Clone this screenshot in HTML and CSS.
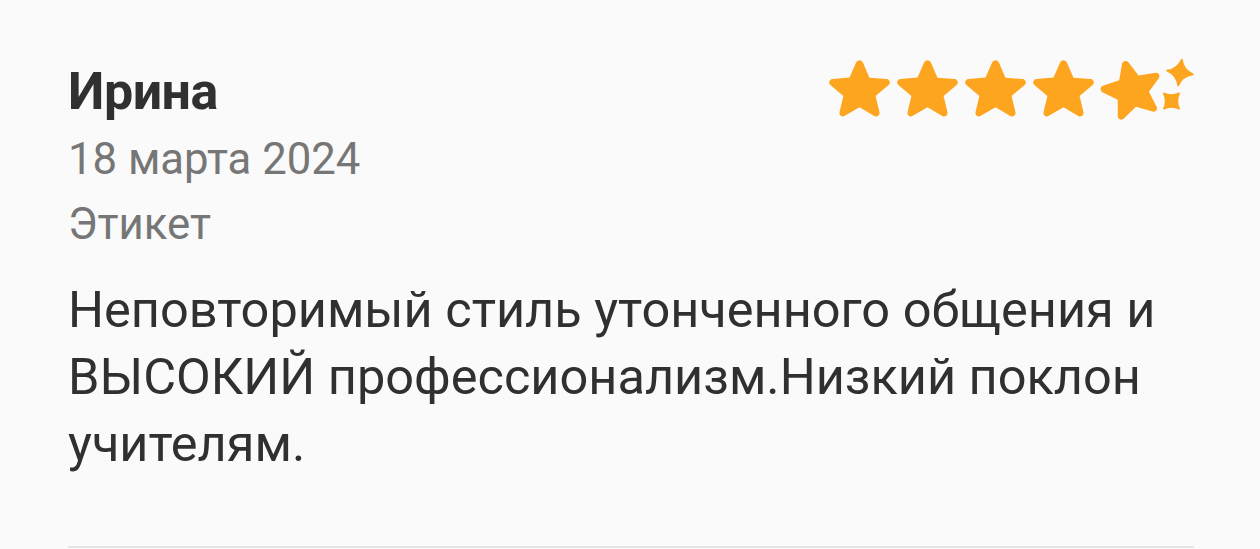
FILE: index.html
```html
<!DOCTYPE html>
<html lang="ru">
<head>
    <meta charset="UTF-8">
    <meta name="viewport" content="width=device-width, initial-scale=1.0">
    <title>Отзыв</title>
    <link rel="stylesheet" href="styles.css">
</head>
<body>
    <svg class="icon-defs" aria-hidden="true">
        <symbol id="star" viewBox="3.4 3.5 17.2 16.6" preserveAspectRatio="none">
            <path d="M12 17.27l4.15 2.51c.76.46 1.69-.22 1.49-1.08l-1.1-4.72 3.67-3.18c.67-.58.31-1.68-.57-1.75l-4.83-.41-1.89-4.46c-.34-.81-1.5-.81-1.84 0L9.19 8.63l-4.83.41c-.88.07-1.24 1.17-.57 1.75l3.67 3.18-1.1 4.72c-.2.86.73 1.54 1.49 1.08l4.15-2.5z"/>
        </symbol>
    </svg>

    <article class="review">
        <div class="review-head">
            <div class="review-meta">
                <h2 class="author">Ирина</h2>
                <div class="date">18 марта 2024</div>
                <div class="tag">Этикет</div>
            </div>
            <div class="rating" aria-label="Оценка 5 из 5">
                <svg class="star"><use href="#star"/></svg>
                <svg class="star"><use href="#star"/></svg>
                <svg class="star"><use href="#star"/></svg>
                <svg class="star"><use href="#star"/></svg>
                <svg class="star star-tilt"><use href="#star"/></svg>
                <!-- sparkles next to the last star -->
                <svg class="sparkles" viewBox="0 0 32 55">
                    <path transform="translate(18 12.5) rotate(8) scale(13)" d="M0 -1Q0.22 -0.22 1 0Q0.22 0.22 0 1Q-0.22 0.22 -1 0Q-0.22 -0.22 0 -1Z"/>
                    <path transform="translate(9.5 41) rotate(45) scale(11)" d="M0 -1Q0.26 -0.26 1 0Q0.26 0.26 0 1Q-0.26 0.26 -1 0Q-0.26 -0.26 0 -1Z"/>
                </svg>
            </div>
        </div>
        <p class="review-text">Неповторимый стиль утонченного общения и ВЫСОКИЙ профессионализм.Низкий поклон учителям.</p>
    </article>
</body>
</html>
```

FILE: styles.css
```css
:root {
    --bg: #fafafa;
    --text-primary: #303030;
    --text-secondary: #767676;
    --star: #fea51f;
    --divider: #e4e4e4;
}

body {
    margin: 0;
    background: var(--bg);
    font-family: Roboto, "Noto Sans", sans-serif;
    color: var(--text-primary);
}

.icon-defs {
    display: none;
}

.review {
    margin: 0 66px 0 68px;
    padding-top: 57px;
    border-bottom: 2px solid var(--divider);
}

.review-head {
    display: flex;
    justify-content: space-between;
    align-items: flex-start;
}

.author {
    margin: 0;
    font-size: 52px;
    line-height: 70px;
    font-weight: 700;
    letter-spacing: -0.5px;
    color: var(--text-primary);
}

.date,
.tag {
    font-size: 43.7px;
    line-height: 65px;
    color: var(--text-secondary);
}

.rating {
    display: flex;
    align-items: flex-start;
    gap: 7px;
    margin-top: 3px;
}

.star {
    width: 61px;
    height: 57px;
    fill: var(--star);
    display: block;
}

.star-tilt {
    transform: rotate(-14deg);
}

.sparkles {
    width: 32px;
    height: 55px;
    margin-left: -7px;
    fill: var(--star);
    stroke: var(--star);
    stroke-width: 0.14;
    stroke-linejoin: round;
    overflow: visible;
    display: block;
}

.review-text {
    margin: 19px 0 0;
    padding-bottom: 69px;
    font-size: 50.5px;
    line-height: 67px;
    color: var(--text-primary);
}
```
